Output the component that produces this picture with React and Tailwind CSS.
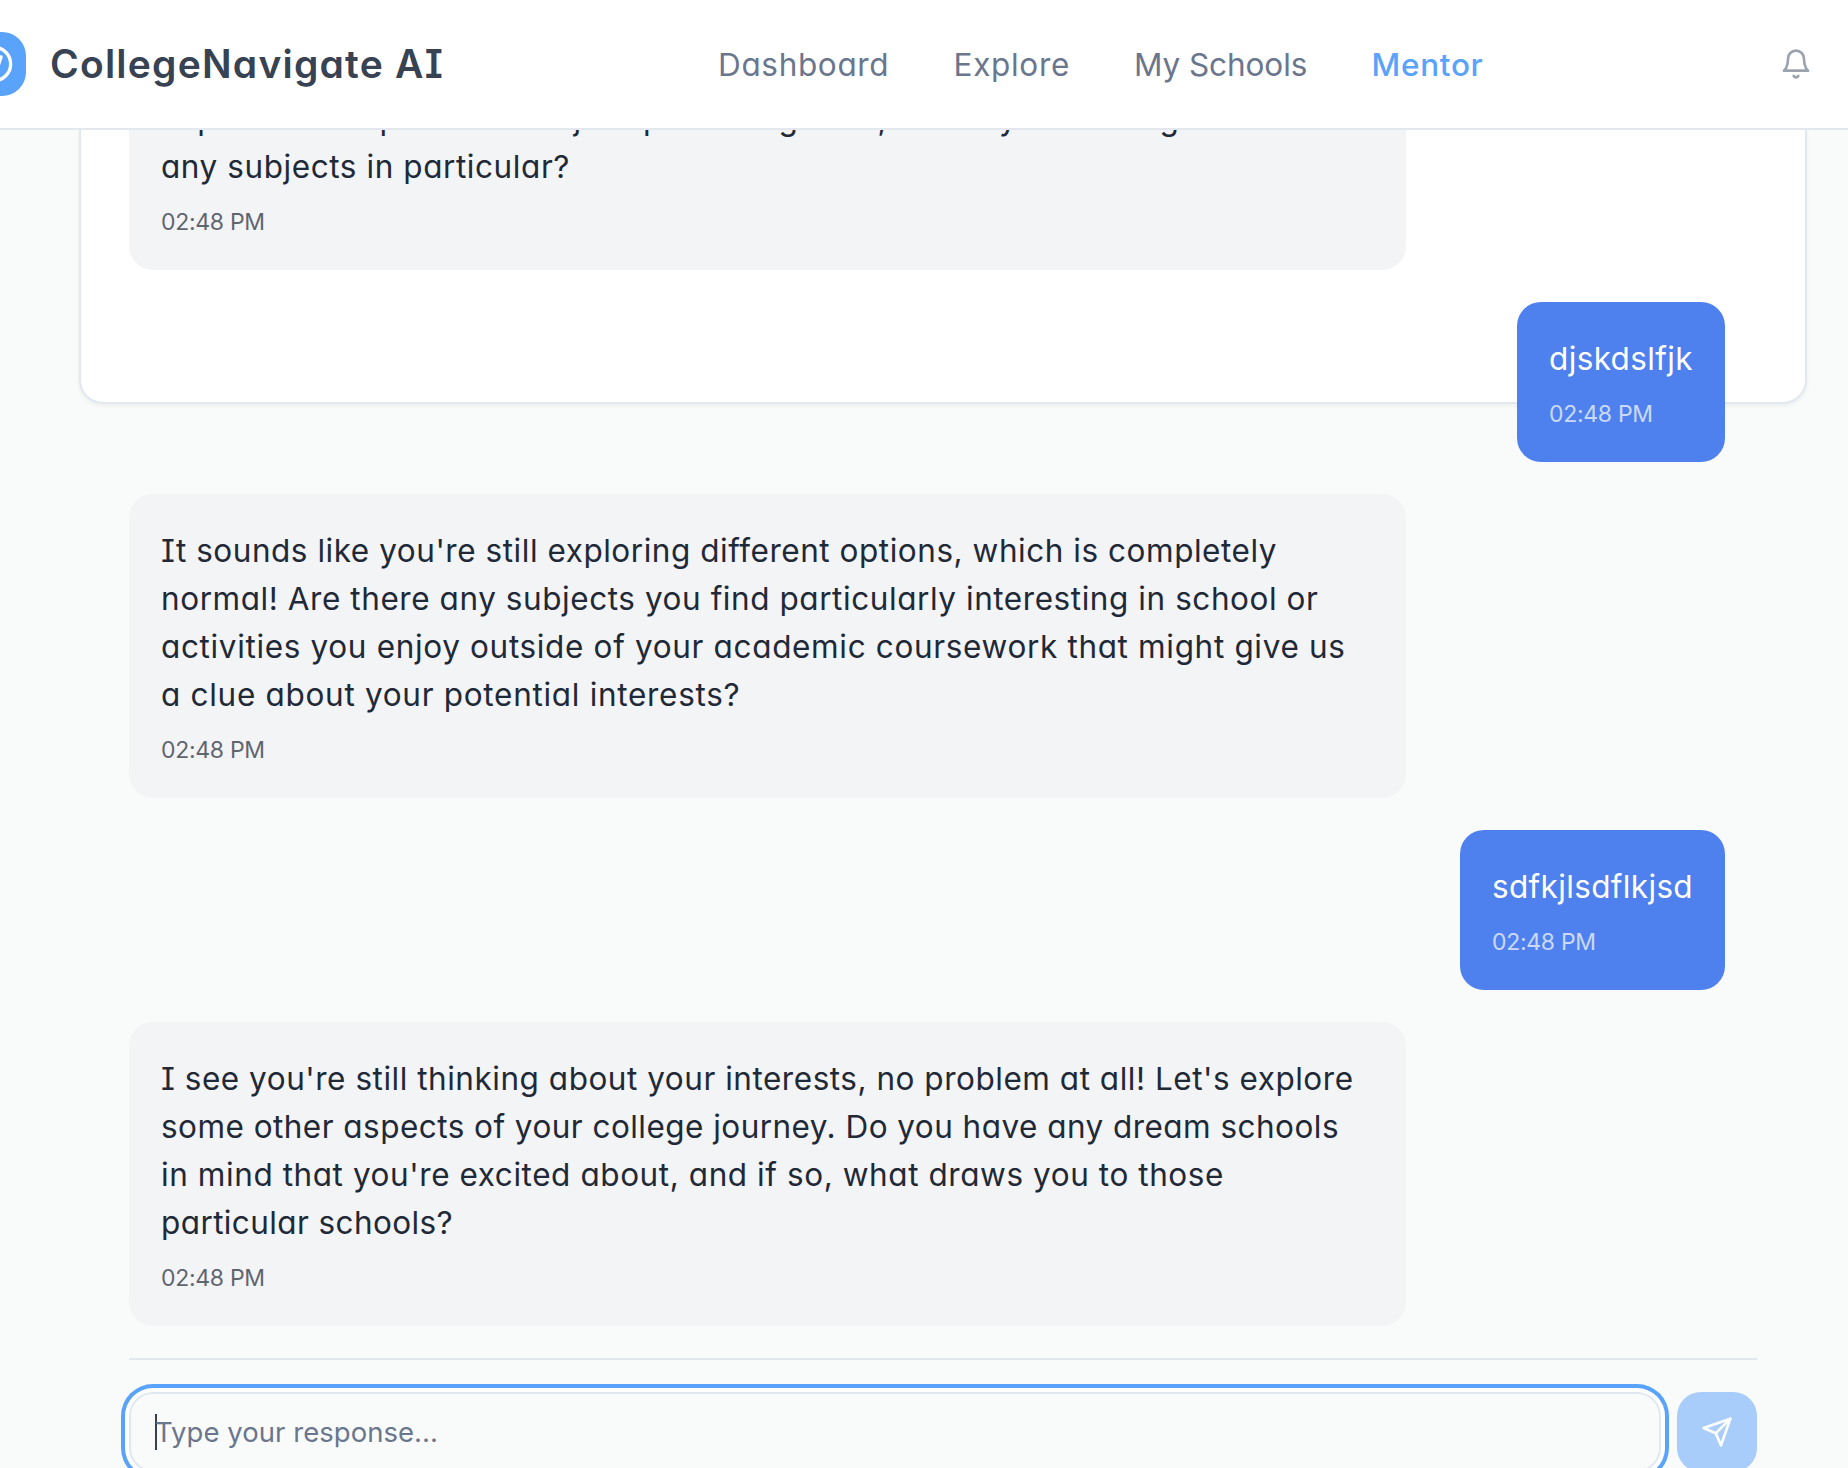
const messages = [
  {
    from: "mentor",
    continued: true,
    lines: [
      ["explore some potential major options together, or are you leaning towards", "tracking-[0.69px]"],
      ["any subjects in particular?", "tracking-[0.575px]"],
    ],
  },
  { from: "user", width: "w-[208px]", lines: [["djskdslfjk", "tracking-[0.375px]"]] },
  {
    from: "mentor",
    lines: [
      ["It sounds like you're still exploring different options, which is completely", "tracking-[0.538px]"],
      ["normal! Are there any subjects you find particularly interesting in school or", "tracking-[0.564px]"],
      ["activities you enjoy outside of your academic coursework that might give us", "tracking-[0.658px]"],
      ["a clue about your potential interests?", "tracking-[0.7px]"],
    ],
  },
  { from: "user", width: "w-[265px]", lines: [["sdfkjlsdflkjsd", "tracking-[0.346px]"]] },
  {
    from: "mentor",
    lines: [
      ["I see you're still thinking about your interests, no problem at all! Let's explore", "tracking-[0.525px]"],
      ["some other aspects of your college journey. Do you have any dream schools", "tracking-[0.461px]"],
      ["in mind that you're excited about, and if so, what draws you to those", "tracking-[0.574px]"],
      ["particular schools?", "tracking-[0.4px]"],
    ],
  },
];

function Icon({ className, children }) {
  return (
    <svg
      className={className}
      viewBox="0 0 24 24"
      fill="none"
      stroke="currentColor"
      strokeWidth="2"
      strokeLinecap="round"
      strokeLinejoin="round"
    >
      {children}
    </svg>
  );
}

function Header() {
  return (
    <header className="flex h-[130px] shrink-0 items-center border-b-2 border-[#e2e8ee] bg-white pr-9">
      <div className="-ml-[38px] flex size-16 shrink-0 items-center justify-center rounded-[24px] bg-[#5aa3fa] text-white">
        <Icon className="size-10">
          <circle cx="12" cy="12" r="10" />
          <polygon points="16.24 7.76 14.12 14.12 7.76 16.24 9.88 9.88 16.24 7.76" />
        </Icon>
      </div>
      <span className="ml-6 w-[394px] text-[39px] font-semibold whitespace-nowrap tracking-[1.224px] text-[#374253]">
        CollegeNavigate AI
      </span>
      <nav className="ml-[274px] flex gap-16 pt-0.5 text-[31.5px] whitespace-nowrap text-[#6a768d]">
        <a className="w-[171.5px] tracking-[0.66px]">Dashboard</a>
        <a className="w-[116.5px] tracking-[0.694px]">Explore</a>
        <a className="w-[173.5px] tracking-[-0.08px]">My Schools</a>
        <a className="w-[112px] font-medium tracking-[0.695px] text-[#5aa3fa]">Mentor</a>
      </nav>
      <Icon className="ml-auto size-8 text-[#9ca3af]">
        <path d="M6 8a6 6 0 0 1 12 0c0 7 3 9 3 9H3s3-2 3-9" />
        <path d="M10.3 21a1.94 1.94 0 0 0 3.4 0" />
      </Icon>
    </header>
  );
}

function Message({ from, continued, width, lines }) {
  const user = from === "user";
  return (
    <div
      className={[
        "shrink-0 px-8 pb-8",
        continued ? "rounded-b-[24px]" : "rounded-[24px] pt-8",
        user ? "self-end bg-[#4e80ee] text-white" : "w-4/5 bg-[#f3f4f6] text-[#1f2937]",
        width || "",
      ].join(" ")}
    >
      <div className="-mb-px pt-px text-[31.5px] leading-[48px]">
        {lines.map(([text, tracking]) => (
          <p key={text} className={`whitespace-nowrap ${tracking}`}>
            {text}
          </p>
        ))}
      </div>
      <p className="mt-4 text-[23px] leading-8 tracking-[-0.3px] opacity-70">02:48 PM</p>
    </div>
  );
}

function Composer() {
  return (
    <div className="mt-8 flex gap-4 border-t-2 border-[#e2e8ee] pt-8">
      <div className="flex h-20 flex-1 items-center rounded-[24px] border-2 border-[#e2e8f0] bg-[#f9fbfa] px-6 ring-4 ring-[#5aa3fa] ring-offset-4 ring-offset-white">
        <span className="-mr-0.5 h-9 w-0.5 bg-[#374151]" />
        <span className="pt-px text-[27.5px] tracking-[0.039px] text-[#6a768d]">Type your response...</span>
      </div>
      <button className="flex size-20 items-center justify-center rounded-[24px] bg-[#a9cdfb] text-white">
        <Icon className="size-8">
          <path d="m22 2-7 20-4-9-9-4Z" />
          <path d="M22 2 11 13" />
        </Icon>
      </button>
    </div>
  );
}

export default function App() {
  return (
    <div className="flex h-[1468px] w-[1848px] flex-col overflow-hidden bg-[#f9fbfa] font-['Inter',sans-serif] [font-feature-settings:'cv11','cv08']">
      <Header />
      <main className="flex-1 overflow-hidden pr-[41px] pl-[79px]">
        <div className="flex h-[274px] flex-col rounded-b-[24px] border-2 border-t-0 border-[#e2e8f0] bg-white px-12 shadow-[0_2px_4px_rgba(0,0,0,0.05)]">
          <div className="-mt-9 flex shrink-0 flex-col gap-8 pr-8">
            {messages.map((m, i) => (
              <Message key={i} {...m} />
            ))}
          </div>
          <Composer />
        </div>
      </main>
    </div>
  );
}
